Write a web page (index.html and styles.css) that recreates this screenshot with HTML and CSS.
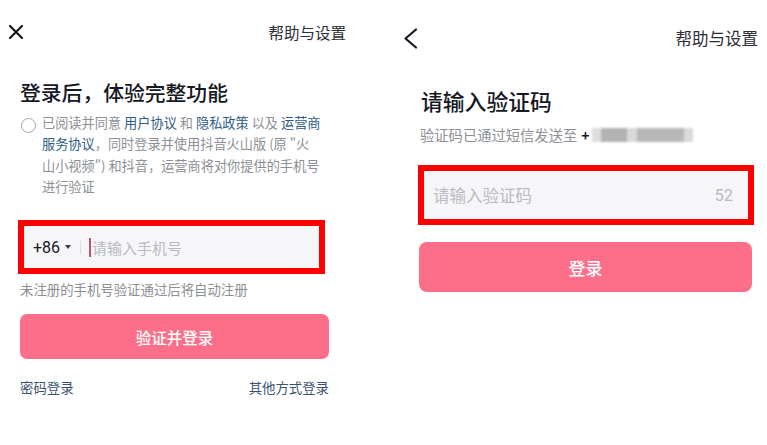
FILE: index.html
```html
<!DOCTYPE html>
<html lang="zh-CN">
<head>
<meta charset="utf-8">
<title>登录</title>
<link rel="stylesheet" href="styles.css">
</head>
<body>
<div class="screens">
  <section class="screen screen-phone">
    <header class="topbar topbar-phone">
      <svg class="icon-close" width="16" height="16" viewBox="0 0 16 16"><path d="M2 2 L14 14 M14 2 L2 14" stroke="#161823" stroke-width="2.2" stroke-linecap="round" fill="none"/></svg>
      <span class="help">帮助与设置</span>
    </header>
    <div class="content content-phone">
      <h1 class="title title-phone">登录后，体验完整功能</h1>
      <div class="agree">
        <span class="radio"></span>
        <p class="agree-text">已阅读并同意 <a class="link">用户协议</a> 和 <a class="link">隐私政策</a> 以及 <a class="link">运营商</a><br><a class="link">服务协议</a>，同时登录并使用抖音火山版 (原 "火<br>山小视频") 和抖音，运营商将对你提供的手机号<br>进行验证</p>
      </div>
      <div class="field field-phone">
        <span class="code">+86</span>
        <span class="tri"></span>
        <span class="divider"></span>
        <span class="caret"></span>
        <span class="placeholder">请输入手机号</span>
      </div>
      <p class="hint">未注册的手机号验证通过后将自动注册</p>
      <button class="btn btn-phone">验证并登录</button>
      <div class="links">
        <a class="foot-link">密码登录</a>
        <a class="foot-link">其他方式登录</a>
      </div>
    </div>
  </section>
  <section class="screen screen-code">
    <header class="topbar topbar-code">
      <svg class="icon-back" width="15" height="21" viewBox="0 0 15 21"><path d="M13 1.5 L2.5 10.5 L13 19.5" stroke="#161823" stroke-width="2.2" stroke-linecap="round" stroke-linejoin="round" fill="none"/></svg>
      <span class="help help-code">帮助与设置</span>
    </header>
    <div class="content content-code">
      <h1 class="title title-code">请输入验证码</h1>
      <p class="sub">验证码已通过短信发送至 <b class="plus">+</b><span class="masked"></span></p>
      <div class="field field-code">
        <span class="placeholder placeholder-code">请输入验证码</span>
        <span class="count">52</span>
      </div>
      <button class="btn btn-code">登录</button>
    </div>
  </section>
</div>
</body>
</html>
```
FILE: styles.css
```css
* { box-sizing: border-box; }
html, body { margin: 0; padding: 0; background: #fff; }
body {
  font-family: "Noto Sans CJK SC", "Noto Sans", "Liberation Sans", sans-serif;
  color: #161823;
  width: 767px;
  height: 445px;
  overflow: hidden;
}
.screens { display: flex; width: 767px; height: 445px; }
.screen { display: flex; flex-direction: column; }
.screen-phone { width: 383px; padding-top: 22px; }
.screen-code { width: 384px; padding-top: 28px; }

.topbar { display: flex; align-items: center; justify-content: space-between; height: 20px; }
.topbar-phone { padding: 0 37px 0 8px; }
.topbar-code { padding: 0 9px 0 20px; }
.icon-close, .icon-back { display: block; }
.help { font-size: 15.5px; line-height: 20px; color: #2b2d35; }
.help-code { font-size: 16.5px; }

.content { display: flex; flex-direction: column; }
.content-phone { padding-left: 20px; width: 329px; box-sizing: content-box; }
.content-code { padding-left: 37px; }

.title { margin: 0; font-weight: 500; color: #161823; }
.title-phone { font-size: 20.8px; line-height: 28px; margin-top: 36px; }
.title-code { font-size: 21.8px; line-height: 30px; margin-top: 38px; padding-left: 1px; }

.agree { display: flex; align-items: flex-start; margin-top: 6px; margin-left: 1px; }
.radio {
  flex: none; width: 15px; height: 15px; border-radius: 50%;
  border: 1.5px solid #a3a5aa; margin-top: 5.5px; margin-right: 6px;
}
.agree-text {
  margin: 0; font-size: 13.2px; line-height: 21.3px; color: #8d8f95; white-space: nowrap;
}
.link { color: #2f5b86; }

.field {
  display: flex; align-items: center; border: 6px solid #ff0000; background: #f6f6f8;
}
.field-phone { margin-top: 23px; margin-left: -2px; width: 307px; height: 54px; padding-left: 9px; }
.code { font-family: "Roboto", "Noto Sans", sans-serif; font-size: 16px; color: #161823; }
.tri {
  width: 0; height: 0; margin-left: 5px;
  border-left: 3.5px solid transparent; border-right: 3.5px solid transparent; border-top: 4.5px solid #3a3c44;
}
.divider { width: 1px; height: 13px; background: #dcdde0; margin-left: 9px; }
.caret { width: 2px; height: 19px; background: #c64e71; margin-left: 8px; }
.placeholder { font-size: 15px; color: #b9bbc0; margin-left: 1px; }

.hint { margin: 5px 0 0; font-size: 13.4px; line-height: 20px; color: #8d8f95; }

.btn {
  border: 0; background: #fd6f88; color: #fff; font-family: inherit; font-weight: 500;
  padding: 0; display: flex; align-items: center; justify-content: center;
}
.btn-phone { margin-top: 15px; width: 309px; height: 45px; border-radius: 7px; font-size: 15.5px; }
.btn-code { margin-top: 17px; margin-left: -1px; width: 333px; height: 50px; border-radius: 8px; font-size: 17px; }

.links { display: flex; justify-content: space-between; width: 309px; margin-top: 18px; }
.foot-link { font-size: 13.4px; line-height: 20px; color: #3b5170; }

.sub { margin: 9px 0 0; font-size: 14.3px; line-height: 20px; color: #8d8f95; display: flex; align-items: center; white-space: nowrap; }
.plus { color: #161823; font-weight: 700; margin-left: 4px; font-size: 14px; }
.masked {
  display: inline-block; width: 101px; height: 14px; margin-left: 2px; filter: blur(0.8px);
  background: linear-gradient(90deg, #dedede 0 9px, #b3b3b3 9px 35px, #d9d9d9 35px 45px, #b8b8b8 45px 92px, #dadada 92px 101px);
}

.field-code { margin-top: 20px; margin-left: -2px; width: 336px; height: 60px; padding: 0 15px 0 9px; justify-content: space-between; }
.placeholder-code { font-size: 16.5px; margin-left: 0; }
.count { font-family: "Roboto", "Noto Sans", sans-serif; font-size: 16.5px; color: #b9bbc0; }
```
